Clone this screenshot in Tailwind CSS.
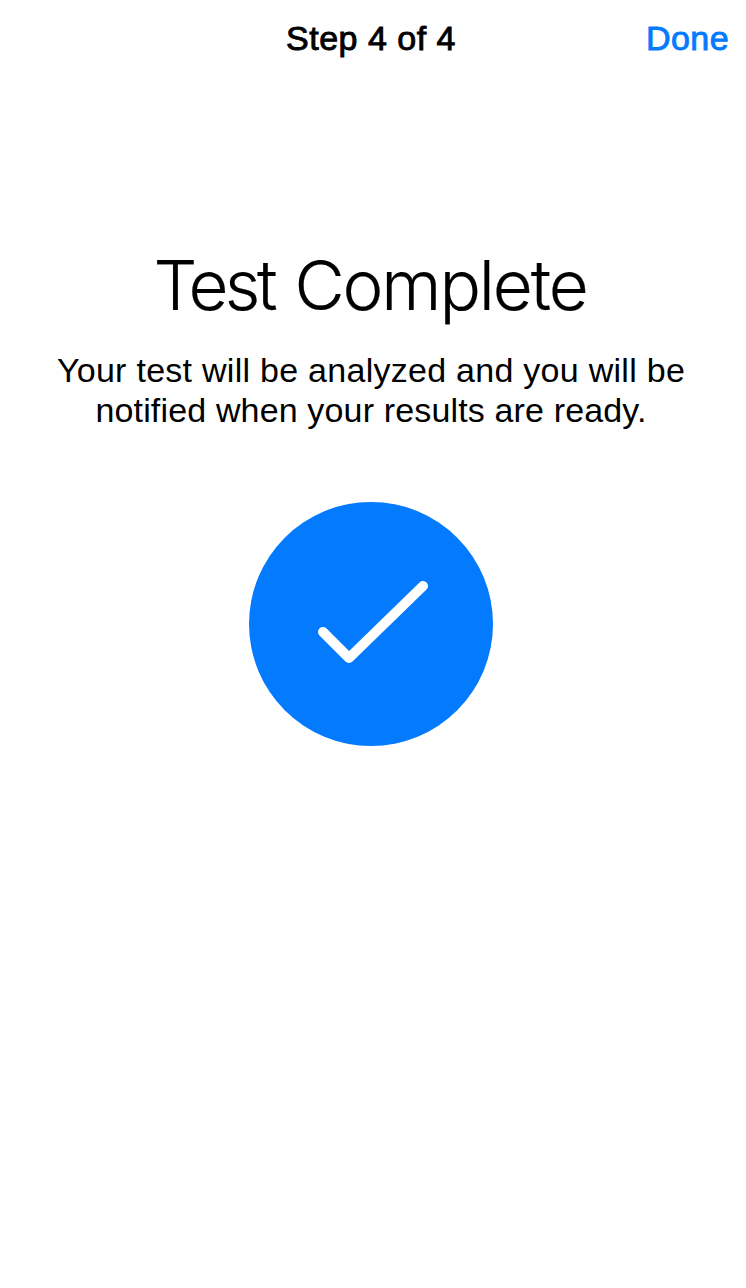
<!DOCTYPE html>
<html lang="en">
<head>
<meta charset="utf-8">
<title>Test Complete</title>
<script src="https://cdn.jsdelivr.net/npm/@tailwindcss/browser@4"></script>
</head>
<body class="bg-white text-black">
<div class="w-[742px] min-h-[1288px] flex flex-col items-center font-['Liberation_Sans',Arial,sans-serif]">
  <header class="w-full h-[76px] grid grid-cols-[1fr_auto_1fr] items-center pr-[13px] pl-[13px] text-[34px] leading-[40px] [-webkit-text-stroke-width:0.9px]">
    <span></span>
    <h1 class="whitespace-nowrap tracking-[0.5px]">Step 4 of 4</h1>
    <button class="justify-self-end text-[#047aff] tracking-[0.4px]">Done</button>
  </header>
  <main class="flex flex-col items-center">
    <h2 class="mt-[167px] pr-[2px] whitespace-nowrap font-['Inter',sans-serif] font-light text-[69px] leading-[84px] tracking-[-2.1px] [word-spacing:3px] [-webkit-text-stroke-width:0.2px]"><span class="tracking-[-3.5px]">Test</span> Complete</h2>
    <p class="mt-[23px] flex flex-col items-center text-[34px] leading-[40px] whitespace-nowrap"><span class="tracking-[0.27px]">Your test will be analyzed and you will be</span> <span class="tracking-[0.15px]">notified when your results are ready.</span></p>
    <svg class="mt-[72px] w-[244px] h-[244px]" viewBox="0 0 244 244" fill="none">
      <circle cx="122" cy="122" r="122" fill="#047aff"/>
      <path d="M74 130L100 156L174 84" stroke="#fff" stroke-width="10" stroke-linecap="round" stroke-linejoin="round"/>
    </svg>
  </main>
</div>
</body>
</html>
